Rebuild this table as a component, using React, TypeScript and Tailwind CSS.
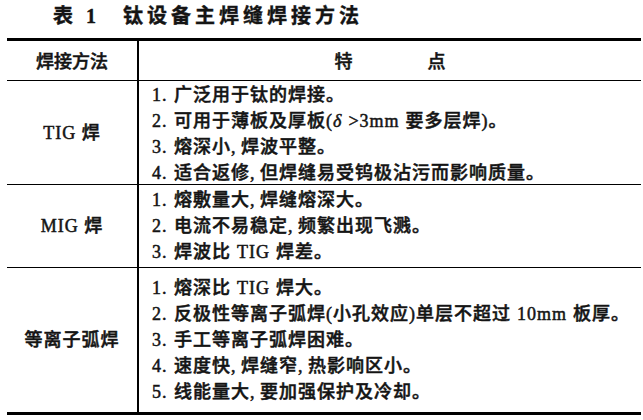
import type { ReactNode } from 'react';

type Row = {
  name: string;
  rowClass: string;
  padClass: string;
  items: string[];
};

const ROWS: Row[] = [
  {
    name: 'TIG 焊',
    rowClass: 'h-[104px] border-b border-black',
    padClass: 'pt-[1px]',
    items: [
      '广泛用于钛的焊接。',
      '可用于薄板及厚板(δ >3mm 要多层焊)。',
      '熔深小,焊波平整。',
      '适合返修,但焊缝易受钨极沾污而影响质量。',
    ],
  },
  {
    name: 'MIG 焊',
    rowClass: 'h-[83px] border-b border-black',
    padClass: 'pt-[2px]',
    items: ['熔敷量大,焊缝熔深大。', '电流不易稳定,频繁出现飞溅。', '焊波比 TIG 焊差。'],
  },
  {
    name: '等离子弧焊',
    rowClass: 'h-[147px] border-b-[3px] border-black',
    padClass: 'pt-[7px]',
    items: [
      '熔深比 TIG 焊大。',
      '反极性等离子弧焊(小孔效应)单层不超过 10mm 板厚。',
      '手工等离子弧焊困难。',
      '速度快,焊缝窄,热影响区小。',
      '线能量大,要加强保护及冷却。',
    ],
  },
];

// commas in the scan take about half a character cell; δ is set in italic
function fmt(text: string): ReactNode[] {
  return text.split(/([,δ ])/).map((part, i) => {
    if (part === ',') {
      return (
        <span key={i} className="inline-block w-[10px]">
          ,
        </span>
      );
    }
    if (part === 'δ') {
      return (
        <span key={i} className="italic">
          δ
        </span>
      );
    }
    if (part === ' ') {
      return <span key={i} className="inline-block w-[6px]" />;
    }
    return <span key={i}>{part}</span>;
  });
}

export default function App() {
  return (
    <div className="w-[643px] h-[420px] bg-white text-[#141414] font-['Liberation_Serif','Noto_Sans_CJK_SC',serif] overflow-hidden">
      <div className="h-[38px] pt-[4px] pl-[53px] flex items-start text-[20px] leading-[24px] font-bold [-webkit-text-stroke:0.4px_#141414]">
        <span>表</span>
        <span className="ml-[13px]">1</span>
        <span className="ml-[27px] tracking-[4px]">钛设备主焊缝焊接方法</span>
      </div>

      <div className="ml-[7px] w-[634px] border-t-[3px] border-black text-[18px] leading-[26px] font-medium [-webkit-text-stroke:0.5px_#141414]">
        <div className="flex h-[40px] border-b border-black">
          <div className="w-[132px] border-r-2 border-black flex items-center justify-center pt-[3px]">
            焊接方法
          </div>
          <div className="flex-1 flex items-center justify-center gap-[75px] pt-[3px]">
            <span>特</span>
            <span>点</span>
          </div>
        </div>

        {ROWS.map((row) => (
          <div key={row.name} className={`flex ${row.rowClass}`}>
            <div className="w-[132px] border-r-2 border-black flex items-center justify-center tracking-[1px]">
              {row.name}
            </div>
            <div className={`flex-1 pl-[13px] tracking-[1px] ${row.padClass}`}>
              {row.items.map((item, i) => (
                <div key={i} className="flex whitespace-nowrap">
                  <span className="w-[22px] shrink-0">{i + 1}.</span>
                  <span>{fmt(item)}</span>
                </div>
              ))}
            </div>
          </div>
        ))}
      </div>
    </div>
  );
}
